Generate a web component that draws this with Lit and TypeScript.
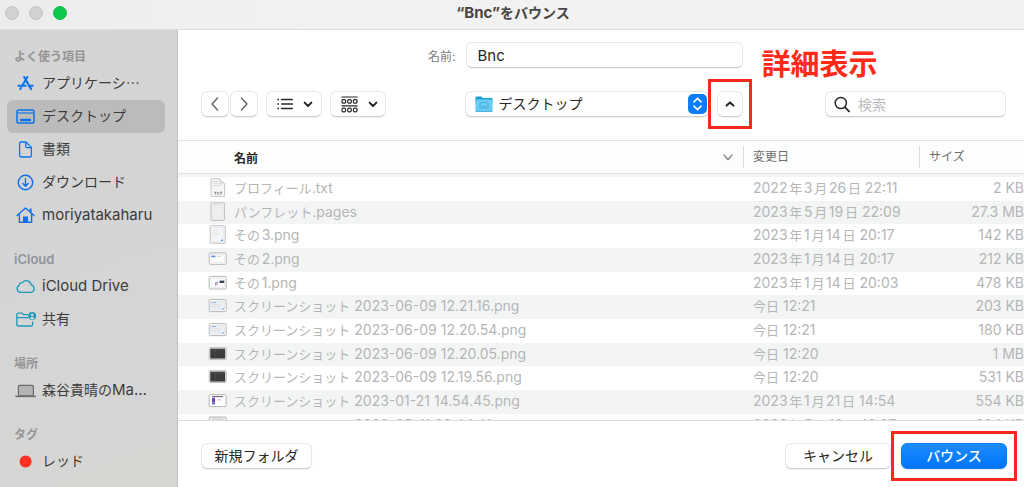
import { LitElement, html, css, svg } from "lit";
import { customElement, state } from "lit/decorators.js";

interface FileRow {
  name: string;
  date: string;
  size: string;
  kind: string;
}

const FILES: FileRow[] = [
  { name: "プロフィール.txt", date: "2022年3月26日 22:11", size: "2 KB", kind: "txt" },
  { name: "パンフレット.pages", date: "2023年5月19日 22:09", size: "27.3 MB", kind: "pages" },
  { name: "その3.png", date: "2023年1月14日 20:17", size: "142 KB", kind: "sheet" },
  { name: "その2.png", date: "2023年1月14日 20:17", size: "212 KB", kind: "form" },
  { name: "その1.png", date: "2023年1月14日 20:03", size: "478 KB", kind: "mixed" },
  { name: "スクリーンショット 2023-06-09 12.21.16.png", date: "今日 12:21", size: "203 KB", kind: "light" },
  { name: "スクリーンショット 2023-06-09 12.20.54.png", date: "今日 12:21", size: "180 KB", kind: "light" },
  { name: "スクリーンショット 2023-06-09 12.20.05.png", date: "今日 12:20", size: "1 MB", kind: "dark" },
  { name: "スクリーンショット 2023-06-09 12.19.56.png", date: "今日 12:20", size: "531 KB", kind: "dark" },
  { name: "スクリーンショット 2023-01-21 14.54.45.png", date: "2023年1月21日 14:54", size: "554 KB", kind: "purple" },
  { name: "スクリーンショット 2023-05-11 20.44.41.png", date: "2023年5月12日 12:27", size: "234 KB", kind: "grey" },
];

const GROUPS = [
  {
    title: "よく使う項目",
    items: [
      { label: "アプリケーシ…", icon: "apps" },
      { label: "デスクトップ", icon: "desktop" },
      { label: "書類", icon: "doc" },
      { label: "ダウンロード", icon: "download" },
      { label: "moriyatakaharu", icon: "home" },
    ],
  },
  {
    title: "iCloud",
    items: [
      { label: "iCloud Drive", icon: "cloud" },
      { label: "共有", icon: "shared" },
    ],
  },
  { title: "場所", items: [{ label: "森谷貴晴のMa…", icon: "laptop" }] },
  { title: "タグ", items: [{ label: "レッド", icon: "tag" }] },
];

/** Wraps the Latin runs of a mixed label, which are set one size larger than the kana and kanji. */
const mixed = (text: string) =>
  text
    .split(/([ -~“”]+…?)/)
    .filter(Boolean)
    .map((part) => (/^[ -~“”]/.test(part) ? html`<span class="latin">${part}</span>` : html`<span class="kana">${part}</span>`));

const BLUE = "#0a72f0";
const TEAL = "#1f9ab8";

const sideIcons: Record<string, unknown> = {
  apps: svg`<g stroke=${BLUE} stroke-width="2.1" fill="none" stroke-linecap="round">
    <path d="M8.2 3 L14.6 14.2 M11.4 3 L6.2 11.8 M4.9 14 L4.3 15 M2.4 11.8 H9.6 M12.6 11.8 H16.8 M14.6 14.2 L15.2 15.2"/></g>`,
  desktop: svg`<g fill="none" stroke=${BLUE} stroke-width="1.5">
    <rect x="1" y="3" width="17" height="13" rx="1.8"/><path d="M1.5 6 H17.5" stroke-width="1.1"/></g>
    <rect x="4" y="11.8" width="11" height="2.4" rx=".6" fill=${BLUE}/>`,
  doc: svg`<g fill="none" stroke=${BLUE} stroke-width="1.3" stroke-linejoin="round">
    <path d="M5 2 H10 L15.4 7.4 V15.6 A1.4 1.4 0 0 1 14 17 H5 A1.4 1.4 0 0 1 3.6 15.6 V3.4 A1.4 1.4 0 0 1 5 2 Z"/>
    <path d="M9.8 2.2 V6.6 A1 1 0 0 0 10.8 7.6 H15.2"/></g>`,
  download: svg`<g fill="none" stroke=${BLUE} stroke-width="1.4" stroke-linecap="round" stroke-linejoin="round">
    <circle cx="9.5" cy="9.5" r="7.2"/><path d="M9.5 5.6 V13 M6.8 10.5 L9.5 13.2 L12.2 10.5"/></g>`,
  home: svg`<g fill="none" stroke=${BLUE} stroke-width="1.4" stroke-linecap="round" stroke-linejoin="round">
    <path d="M1 9.6 L9.5 2 L18 9.6 M3.4 8 V16.2 H15.6 V8"/></g>
    <path d="M13.6 2.6 H15.6 V7 L13.6 5.2 Z M7 10.4 H12 V16.6 H7 Z" fill=${BLUE}/>`,
  cloud: svg`<path d="M4.6 15.4 A3.7 3.7 0 0 1 3.2 8.4 A2.9 2.9 0 0 1 6.4 5.6 A5 5 0 0 1 15.2 7.8 A3.9 3.9 0 0 1 15 15.4 Z"
    fill="none" stroke=${TEAL} stroke-width="1.3" stroke-linejoin="round"/>`,
  shared: svg`<g fill="none" stroke=${TEAL} stroke-width="1.3" stroke-linejoin="round">
    <path d="M12 4.6 H7.6 L6.2 3.2 H2 A1.4 1.4 0 0 0 .8 4.6 V14.6 A1.6 1.6 0 0 0 2.4 16 H15 A1.6 1.6 0 0 0 16.6 14.6 V11.4 M.8 7.6 H12"/></g>
    <circle cx="16.2" cy="6" r="4" fill=${TEAL}/><circle cx="16.2" cy="4.9" r="1.3" fill="#d4d4d4"/>
    <path d="M13.9 8.4 A2.5 2.2 0 0 1 18.5 8.4 A3.4 3.4 0 0 1 13.9 8.4" fill="#d4d4d4"/>`,
  laptop: svg`<rect x="2.4" y="4.4" width="15" height="10.4" rx="1.2" fill="#b4b4b4" stroke="#6b6b6b" stroke-width="1.2"/>
    <path d="M-.6 15.4 H20" stroke="#6b6b6b" stroke-width="1.5"/>`,
  tag: svg`<circle cx="9.6" cy="9.5" r="6" fill="#fb3024"/>`,
};

function thumbnail(kind: string) {
  switch (kind) {
    case "txt":
      return svg`<path d="M3 .8 H11.6 L16.6 5.8 V18.4 H3 Z" fill="#f6f6f6" stroke="#c6c6c6"/>
        <path d="M11.6 .8 V5.8 H16.6 Z" fill="#e2e2e2" stroke="#cfcfcf" stroke-width=".6"/>
        <path d="M4.8 3.5 H10 M4.8 5.6 H10 M4.8 7.7 H13" stroke="#d2d2d2" stroke-width=".9"/>
        <path d="M6.2 14.2 H8.6 M7.4 14.2 V16.6 M9.2 14.2 L11 16.6 M11 14.2 L9.2 16.6 M11.8 14.2 H14.2 M13 14.2 V16.6" stroke="#777" stroke-width=".8"/>`;
    case "pages":
      return svg`<rect x="3" y=".8" width="13.4" height="17.6" rx="1" fill="#eee" stroke="#bdbdbd"/>
        <path d="M6 2.6 H12" stroke="#d6d6d6" stroke-width=".8"/>`;
    case "sheet":
      return svg`<rect x="2.2" y=".8" width="15" height="17.4" rx=".8" fill="#fff" stroke="#bcbcbc"/>
        <rect x="4" y="2.6" width="11.4" height="13.8" fill="#f4f6f9" stroke="#d8dade" stroke-width=".5"/>
        <path d="M5.2 5 H11 M5.2 7.2 H9.6 M5.2 9.4 H12 M5.2 11.6 H9" stroke="#dcdcdc" stroke-width=".8"/>
        <rect x="13" y="14.6" width="2" height="1.4" fill="#4d9bff"/>`;
    case "form":
      return svg`<rect x="1.2" y="3.9" width="17" height="11.4" rx="1" fill="#fff" stroke="#b5b5b5"/>
        <rect x="3" y="5.6" width="13.4" height="7.8" fill="#fafafa" stroke="#ddd" stroke-width=".5"/>
        <rect x="3.4" y="6.6" width="4" height="1.6" fill="#4a8de0"/><path d="M9 7.4 H13" stroke="#ccc" stroke-width=".8"/>`;
    case "mixed":
      return svg`<rect x="1.2" y="3.4" width="17" height="12.6" rx="1" fill="#fff" stroke="#b5b5b5"/>
        <rect x="3" y="5.2" width="13.4" height="9" fill="#fcfcff" stroke="#d6d6e4" stroke-width=".5"/>
        <rect x="11.6" y="7.6" width="4.6" height="2.4" fill="#3a3f4c"/><rect x="7" y="9" width="1.6" height="3.6" fill="#f08585"/>
        <rect x="8.6" y="8.6" width="1.2" height="2.6" fill="#7b8ff0"/>`;
    case "dark":
      return svg`<rect x="1.2" y="3.6" width="17" height="12" rx="1" fill="#fff" stroke="#bdbdbd"/>
        <rect x="2.2" y="4.6" width="15" height="10" fill="#3c3c3e"/>
        <path d="M2.4 6.2 H17 M7 5 V14.4" stroke="#565659" stroke-width=".6"/>`;
    case "purple":
      return svg`<rect x="1.2" y="3.6" width="17" height="12" rx="1" fill="#fff" stroke="#b5b5b5"/>
        <path d="M4 5.6 H15" stroke="#5b5670" stroke-width="1"/><rect x="4" y="6.8" width="3" height="4.6" fill="#7a3fa8"/>
        <rect x="4" y="11.6" width="3" height="1.8" fill="#5a62c8"/><rect x="9" y="8" width="4" height="1.6" fill="#d8d4e8"/>`;
    case "grey":
      return svg`<rect x="1.2" y="2" width="17" height="14" rx="1" fill="#eee" stroke="#b5b5b5"/>
        <path d="M4 4 H15 M4 5.8 H14" stroke="#bbb" stroke-width=".8"/>`;
    default:
      return svg`<rect x="1.2" y="3.6" width="17" height="12" rx="1" fill="#fff" stroke="#b8b8b8"/>
        <rect x="2.8" y="5.2" width="13.8" height="8.8" fill="#eef1f4" stroke="#cdd3d8" stroke-width=".5"/>
        <path d="M3.4 6.6 H8" stroke="#8db8ec" stroke-width="1"/><path d="M4 9 H14 M4 11 H12" stroke="#d4dae0" stroke-width=".8"/>
        <rect x="14" y="12.4" width="1.8" height="1" fill="#5aa0f2"/>`;
  }
}

const chevron = (d: string, width = 2) => html`
  <svg width="10" height="10" viewBox="0 0 10 10" aria-hidden="true">
    <path d=${d} fill="none" stroke="currentColor" stroke-width=${width} stroke-linecap="round" stroke-linejoin="round" />
  </svg>`;

@customElement("side-bar")
class SideBar extends LitElement {
  @state() private current = "desktop";

  static styles = css`
    :host {
      display: block;
      box-sizing: border-box;
      padding: 15px 12px 0 7px;
      background: linear-gradient(160deg, #d5d5d5 0%, #d4d4d4 35%, #d3d5d6 45%, #d5d5d5 60%, #d5d7d3 100%);
      border-right: 1px solid #c0c0c0;
      overflow: hidden;
    }
    .group { margin-bottom: 16px; }
    .heading {
      height: 22px;
      margin: 0;
      padding-left: 7px;
      font-size: 12px;
      line-height: 22px;
      font-weight: 600;
      color: #949494;
    }
    .heading .latin { font-size: 13px; }
    .list { list-style: none; margin: 0; padding: 0; }
    .item {
      display: flex;
      align-items: center;
      gap: 6px;
      height: 33px;
      padding: 0 0 0 9px;
      border-radius: 6px;
      color: #3c3c3c;
      font-size: 14px;
      line-height: 20px;
      text-decoration: none;
      white-space: nowrap;
    }
    .label { padding-bottom: 2px; }
    .label .latin { font-size: 15px; }
    .kana { font-family: "Noto Sans CJK JP", sans-serif; }
    .current { background: #bbb; }
    .icon { flex: none; overflow: visible; }
  `;

  render() {
    return GROUPS.map(
      (group) => html`
        <section class="group">
          <h2 class="heading">${mixed(group.title)}</h2>
          <ul class="list">
            ${group.items.map(
              (item) => html`<li>
                <a
                  class="item ${item.icon === this.current ? "current" : ""}"
                  href="#${item.icon}"
                  @click=${() => (this.current = item.icon)}
                >
                  <svg class="icon" width="20" height="19" viewBox="0 0 20 19" aria-hidden="true">${sideIcons[item.icon]}</svg>
                  <span class="label">${mixed(item.label)}</span>
                </a>
              </li>`
            )}
          </ul>
        </section>
      `
    );
  }
}

@customElement("file-list")
class FileList extends LitElement {
  static styles = css`
    :host {
      display: block;
      overflow: hidden;
      border-top: 1px solid #e4e4e4;
      border-bottom: 1px solid #dcdcdc;
    }
    .table {
      width: 100%;
      table-layout: fixed;
      border-collapse: separate;
      border-spacing: 0;
      font-size: 13px;
    }
    .date-col { width: 176px; }
    .size-col { width: 105px; }
    .head {
      height: 33px;
      box-sizing: border-box;
      padding: 0;
      background: #fcfdfd;
      border-bottom: 1px solid #e0e0e0;
      text-align: left;
      font-size: 12px;
      font-weight: 400;
      color: #6c6c6c;
    }
    .label { display: block; border-left: 1px solid #dcdcdc; padding-left: 9px; line-height: 22px; }
    .name-head { padding-left: 56px; color: #262626; font-weight: 600; }
    .sort { display: flex; justify-content: space-between; align-items: center; padding-right: 10px; color: #7c7c7c; }
    .sort-label { color: #262626; }
    .strip { height: 3px; padding: 0; background: #f3f5f5; }
    .cell {
      box-sizing: border-box;
      height: 24px;
      padding: 0 0 2px 10px;
      line-height: 20px;
      color: #b5b6b6;
      white-space: nowrap;
      text-autospace: normal;
    }
    .cell .latin { font-size: 14px; }
    .row:nth-child(3n) .cell { height: 23px; }
    .row:nth-child(odd) .cell { background: #f3f5f5; }
    .name-cell { padding-left: 30px; }
    .file { display: flex; align-items: center; gap: 6px; }
    .thumb { flex: none; }
    .size-cell { text-align: right; }
  `;

  render() {
    return html`
      <table class="table">
        <colgroup>
          <col />
          <col class="date-col" />
          <col class="size-col" />
        </colgroup>
        <thead>
          <tr>
            <th class="head name-head" scope="col" aria-sort="descending">
              <span class="sort">
                <span class="sort-label">名前</span>
                ${chevron("M1 3 L5 7.5 L9 3", 1.2)}
              </span>
            </th>
            <th class="head" scope="col"><span class="label">変更日</span></th>
            <th class="head" scope="col"><span class="label">サイズ</span></th>
          </tr>
        </thead>
        <tbody>
          <tr aria-hidden="true"><td class="strip" colspan="3"></td></tr>
          ${FILES.map(
            (file) => html`<tr class="row">
              <td class="cell name-cell">
                <span class="file">
                  <svg class="thumb" width="20" height="20" viewBox="0 0 20 20" aria-hidden="true">${thumbnail(file.kind)}</svg>
                  <span>${mixed(file.name)}</span>
                </span>
              </td>
              <td class="cell">${mixed(file.date)}</td>
              <td class="cell size-cell">${mixed(file.size)}</td>
            </tr>`
          )}
        </tbody>
      </table>
    `;
  }
}

@customElement("app-root")
class AppRoot extends LitElement {
  @state() private fileName = "Bnc";

  static styles = css`
    :host {
      display: grid;
      grid-template-rows: 30px minmax(0, 1fr);
      height: 100vh;
      overflow: hidden;
      font-family: Inter, "Noto Sans CJK JP", sans-serif;
      background: #fff;
      color: #262626;
    }
    .title-bar {
      display: grid;
      grid-template-columns: 1fr auto 1fr;
      align-items: center;
      padding: 0 3px 4px 5px;
      box-sizing: border-box;
      background: linear-gradient(90deg, #ececec, #f2f2f2 30%);
      border-bottom: 1px solid #dedede;
    }
    .lights { display: flex; gap: 10px; }
    .light {
      width: 14px;
      height: 14px;
      padding: 0;
      box-sizing: border-box;
      border: 1px solid #c2c2c2;
      border-radius: 50%;
      background: #d1d2d1;
    }
    .zoom { background: #0fc74c; border-color: #0dbd47; }
    .title { margin: 0; font-size: 14px; line-height: 20px; font-weight: 700; color: #454545; }
    .title .latin { font-size: 15px; }
    .body { display: grid; grid-template-columns: 178px minmax(0, 1fr); min-height: 0; }
    .main { display: grid; grid-template-rows: auto minmax(0, 1fr) auto; min-width: 0; min-height: 0; }
    .controls {
      display: grid;
      grid-template-columns: 1fr 278px 1fr;
      grid-template-rows: 50px 48px;
      align-items: center;
      padding: 0 18px 12px 23px;
    }
    .name-label { justify-self: end; padding-right: 9px; font-size: 12px; color: #7a7a7a; }
    .box {
      box-sizing: border-box;
      height: 26px;
      border: 1px solid #e6e6e6;
      border-bottom-color: #cfcfcf;
      border-radius: 6px;
      background: #fff;
      box-shadow: 0 1px 1px rgba(0, 0, 0, 0.06);
      font: inherit;
      font-size: 14px;
      color: #262626;
    }
    .name-input { justify-self: end; width: 277px; padding: 0 11px; font-size: 15px; outline: none; }
    .note { margin: 0 0 0 19px; padding-top: 19px; font-size: 29px; line-height: 32px; font-weight: 700; color: #ff2a17; }
    .tools { display: flex; gap: 8px; }
    .pair { display: flex; gap: 1px; }
    .button { display: flex; align-items: center; justify-content: center; padding: 0; }
    .arrow { width: 28px; color: #5e5e5e; }
    .view { width: 56px; gap: 10px; padding-left: 2px; }
    .place { display: flex; justify-content: space-between; }
    .picker { display: flex; align-items: center; width: 244px; padding: 0 1px 0 9px; }
    .select {
      flex: 1;
      min-width: 0;
      padding: 0 0 2px 6px;
      border: 0;
      background: none;
      appearance: none;
      outline: none;
      font: inherit;
      color: inherit;
    }
    .marked { position: relative; display: flex; }
    .marked::after {
      content: "";
      position: absolute;
      inset: -12px -10px;
      border: 3px solid #f8281a;
      pointer-events: none;
    }
    .place .marked::after { inset: -12px -9px; }
    .toggle { width: 26px; }
    .search { justify-self: end; display: flex; align-items: center; gap: 8px; width: 181px; padding-left: 8px; }
    .search-input { flex: 1; min-width: 0; padding: 0; border: 0; outline: none; background: none; font: inherit; }
    .search-input::placeholder { color: #bcbcbc; opacity: 1; }
    .footer {
      display: flex;
      align-items: center;
      gap: 10px;
      height: 66px;
      padding: 4px 17px 0 23px;
      box-sizing: border-box;
    }
    .new-folder { width: 111px; margin-right: auto; }
    .action { width: 106px; }
    .primary {
      border-color: #0a7cf5;
      background: linear-gradient(#1b8cfc, #0074fb);
      color: #fff;
      font-weight: 500;
    }
    .footer .box { padding-bottom: 2px; }
  `;

  render() {
    return html`
      <header class="title-bar">
        <div class="lights">
          <button class="light" aria-label="閉じる"></button>
          <button class="light" aria-label="しまう"></button>
          <button class="light zoom" aria-label="拡大"></button>
        </div>
        <h1 class="title">${mixed("“Bnc”をバウンス")}</h1>
      </header>
      <div class="body">
        <side-bar></side-bar>
        <main class="main">
          <div class="controls">
            <label class="name-label" for="name">名前:</label>
            <input
              id="name"
              class="box name-input"
              type="text"
              .value=${this.fileName}
              @input=${(e: Event) => (this.fileName = (e.target as HTMLInputElement).value)}
            />
            <p class="note">詳細表示</p>

            <div class="tools">
              <div class="pair">
                <button class="box button arrow" aria-label="戻る">
                  <svg width="12" height="16" viewBox="0 0 12 16"><path d="M8.6 2 L3 8 L8.6 14" fill="none" stroke="currentColor" stroke-width="1.3" stroke-linecap="round" stroke-linejoin="round" /></svg>
                </button>
                <button class="box button arrow" aria-label="進む">
                  <svg width="12" height="16" viewBox="0 0 12 16"><path d="M3.4 2 L9 8 L3.4 14" fill="none" stroke="currentColor" stroke-width="1.3" stroke-linecap="round" stroke-linejoin="round" /></svg>
                </button>
              </div>
              <button class="box button view" aria-label="表示形式">
                <svg width="16" height="14" viewBox="0 0 16 14" stroke="currentColor">
                  <path d="M4.6 2.5 H15.4 M4.6 7 H15.4 M4.6 11.5 H15.4" stroke-width="1.3" stroke-linecap="round" />
                  <path d="M.4 2.5 H2 M.4 7 H2 M.4 11.5 H2" stroke-width="1.5" />
                </svg>
                ${chevron("M1.6 3.6 L5 7 L8.4 3.6")}
              </button>
              <button class="box button view" aria-label="グループ">
                <svg width="17" height="17" viewBox="0 0 17 17" fill="none" stroke="currentColor" stroke-width="1.2">
                  <path d="M.5 1 H16.5 M.5 9.8 H16.5" />
                  ${[5.4, 14].map((y) => [2.8, 8.5, 14.2].map((x) => svg`<rect x=${x - 1.8} y=${y - 1.8} width="3.6" height="3.6" rx="1.2"/>`))}
                </svg>
                ${chevron("M1.6 3.6 L5 7 L8.4 3.6")}
              </button>
            </div>

            <div class="place">
              <div class="box picker">
                <svg width="18" height="18" viewBox="0 0 18 18" aria-hidden="true">
                  <path d="M.4 3 A1.4 1.4 0 0 1 1.8 1.6 H6.4 L8 3 H16.4 A1.2 1.2 0 0 1 17.6 4.2 V8 H.4 Z" fill="#1e9fce" />
                  <rect x=".4" y="4.6" width="17.2" height="12.2" rx="1.2" fill="#6bcdf5" />
                  <path d="M.6 16.4 H17.4" stroke="#41a8d6" stroke-width=".9" />
                  <rect x="5" y="7.6" width="8" height="5.6" rx=".6" fill="none" stroke="#3fa9d8" stroke-width=".9" />
                  <path d="M6.6 11.6 H11.4" stroke="#3fa9d8" stroke-width=".9" />
                </svg>
                <select class="select" aria-label="保存場所">
                  <option>デスクトップ</option>
                </select>
                <svg width="19" height="20" viewBox="0 0 19 20" aria-hidden="true">
                  <rect width="19" height="20" rx="5" fill="#0a7dfb" />
                  <path d="M6 7.8 L9.5 4.4 L13 7.8 M6 12.2 L9.5 15.6 L13 12.2" fill="none" stroke="#fff" stroke-width="1.7" stroke-linecap="round" stroke-linejoin="round" />
                </svg>
              </div>
              <span class="marked">
                <button class="box button toggle" aria-label="詳細表示" aria-expanded="true">
                  ${chevron("M1.6 6.6 L5 3.4 L8.4 6.6")}
                </button>
              </span>
            </div>

            <label class="box search">
              <svg width="16" height="17" viewBox="0 0 16 17" aria-hidden="true">
                <circle cx="6.8" cy="7" r="5.6" fill="none" stroke="#262626" stroke-width="1.5" />
                <path d="M10.9 11.2 L15 15.4" stroke="#262626" stroke-width="1.8" stroke-linecap="round" />
              </svg>
              <input class="search-input" type="text" placeholder="検索" aria-label="検索" />
            </label>
          </div>

          <file-list></file-list>

          <footer class="footer">
            <button class="box button new-folder">新規フォルダ</button>
            <button class="box button action">キャンセル</button>
            <span class="marked"><button class="box button action primary">バウンス</button></span>
          </footer>
        </main>
      </div>
    `;
  }
}
